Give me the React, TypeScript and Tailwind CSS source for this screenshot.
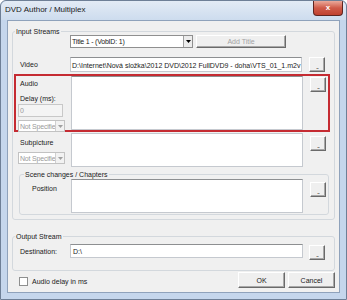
import React from "react";

function Btn({ className = "", children, disabled = false }: { className?: string; children?: React.ReactNode; disabled?: boolean }) {
  return (
    <div
      className={`flex items-center justify-center bg-[#efefef] border border-t-white border-l-white border-r-[#6a6a6a] border-b-[#6a6a6a] shadow-[inset_-1px_-1px_0_#a8a8a8] ${
        disabled ? "text-[#a3a3a3]" : "text-[#1a1a1a]"
      } ${className}`}
    >
      {children}
    </div>
  );
}

function Dots({ className = "" }: { className?: string }) {
  return (
    <Btn className={`w-[16px] h-[15px] ${className}`}>
      <span className="mt-[4px] text-[7px] leading-none tracking-[-1px]">..</span>
    </Btn>
  );
}

function Combo({ text, className = "", disabled = false }: { text: string; className?: string; disabled?: boolean }) {
  return (
    <div
      className={`flex items-center bg-white border ${
        disabled ? "border-[#c2c2c2] text-[#9a9a9a]" : "border-[#8f8f8f] text-[#1a1a1a]"
      } ${className}`}
    >
      <span className="flex-1 pl-[1px] overflow-hidden whitespace-nowrap tracking-[-0.2px]">{text}</span>
      <div
        className={`w-[9px] h-full flex items-center justify-center border-l ${
          disabled ? "border-[#d0d0d0] bg-[#f2f2f2]" : "border-[#a0a0a0] bg-[#ececec]"
        }`}
      >
        <svg width="5" height="3" viewBox="0 0 5 3">
          <path d="M0 0h5L2.5 3z" fill={disabled ? "#a0a0a0" : "#000"} />
        </svg>
      </div>
    </div>
  );
}

function Box({ className = "", children }: { className?: string; children?: React.ReactNode }) {
  return (
    <div className={`bg-white border border-[#c5c9cf] border-t-[#8d8f91] overflow-hidden whitespace-nowrap ${className}`}>
      {children}
    </div>
  );
}

export default function App() {
  return (
    <div className="w-[347px] h-[300px] bg-[#c5d6ec] border border-[#6e7f96] rounded-t-[6px] flex flex-col font-['Liberation_Sans',Arial,sans-serif] text-[7px] leading-[9px] text-[#1a1a1a] overflow-hidden">
      {/* title bar */}
      <div className="h-[19px] flex items-start bg-gradient-to-b from-[#e3ebf5] to-[#cddcee] rounded-t-[6px]">
        <span className="ml-[4px] mt-[4px] text-[8px] leading-[10px] text-[#1a1a1a]">DVD Author / Multiplex</span>
        <div className="ml-auto mr-[3px] w-[30px] h-[15px] rounded-b-[4px] border border-t-0 border-[#5e2520] bg-gradient-to-b from-[#e9a99b] via-[#cf5a48] to-[#c0412f] flex items-center justify-center">
          <span className="text-white text-[8px] font-bold leading-none">x</span>
        </div>
      </div>

      {/* client */}
      <div className="flex-1 mx-[6px] mb-[6px] bg-[#f0f0f0] border border-[#8fa2bb] flex flex-col">
        <fieldset className="mx-[4px] mt-[6px] border border-[#d3d8dd] rounded-[3px] pb-[4px]">
          <legend className="ml-[2px] px-[1px]">Input Streams</legend>

          <div className="flex -mt-[1px] pl-[57px]">
            <Combo text="Title 1 - (VobID: 1)" className="w-[123px] h-[13px]" />
            <Btn disabled className="ml-[3px] w-[90px] h-[13px]">Add Title</Btn>
          </div>

          <div className="flex items-start mt-[9px]">
            <span className="w-[57px] pl-[7px] mt-[3px]">Video</span>
            <Box className="w-[232px] h-[15px] pl-[1px] pt-[3px]">
              D:\Internet\Nová složka\2012 DVD\2012 FullDVD9 - doha\VTS_01_1.m2v
            </Box>
            <Dots className="ml-[7px]" />
          </div>

          {/* audio (highlighted) */}
          <div className="flex items-start mt-[2px] ml-[1px] mr-[4px] h-[58px] border-2 border-[#c52b32]">
            <div className="w-[55px] pl-[2px] flex flex-col">
              <span className="pl-[2px] mt-[3px]">Audio</span>
              <span className="pl-[2px] mt-[6px]">Delay (ms):</span>
              <div className="mt-[1px] w-[45px] h-[13px] border border-[#c8c8c8] bg-[#f4f4f4] text-[#9a9a9a] pl-[1px] pt-[1px]">0</div>
              <Combo disabled text="Not Specifie" className="mt-[3px] w-[47px] h-[12px]" />
            </div>
            <Box className="w-[232px] h-[54px]" />
            <Dots className="ml-[7px] mt-[1px]" />
          </div>

          <div className="flex items-start mt-[1px]">
            <div className="w-[58px] pl-[5px] flex flex-col">
              <span className="pl-[2px] mt-[5px]">Subpicture</span>
              <Combo disabled text="Not Specifie" className="mt-[5px] w-[47px] h-[12px]" />
            </div>
            <Box className="w-[232px] h-[34px] border-t-[#c5c9cf]" />
            <Dots className="ml-[7px] mt-[3px]" />
          </div>

          <fieldset className="ml-[6px] mr-[5px] mt-[3px] border border-[#d3d8dd] rounded-[3px] pb-[1px]">
            <legend className="ml-[4px] px-[1px]">Scene changes / Chapters</legend>
            <div className="flex items-start">
              <span className="w-[51px] pl-[12px] mt-[5px]">Position</span>
              <Box className="w-[232px] h-[34px]" />
              <Dots className="ml-[7px] mt-[3px]" />
            </div>
          </fieldset>
        </fieldset>

        <fieldset className="mx-[4px] mt-[12px] border border-[#d3d8dd] rounded-[3px] pb-[10px]">
          <legend className="ml-[2px] px-[1px]">Output Stream</legend>
          <div className="flex items-start mt-[3px]">
            <span className="w-[57px] pl-[7px] mt-[3px]">Destination:</span>
            <Box className="w-[233px] h-[14px] pl-[2px] pt-[2px]">D:\</Box>
            <Dots className="ml-[6px] mt-[1px]" />
          </div>
        </fieldset>

        <div className="flex items-start mt-[1px] pl-[11px] pr-[4px]">
          <div className="flex items-center mt-[5px]">
            <div className="w-[9px] h-[9px] bg-white border border-[#8e8f8f]" />
            <span className="ml-[4px]">Audio delay in ms</span>
          </div>
          <Btn className="ml-auto w-[47px] h-[16px]">OK</Btn>
          <Btn className="ml-[3px] w-[47px] h-[16px]">Cancel</Btn>
        </div>
      </div>
    </div>
  );
}
